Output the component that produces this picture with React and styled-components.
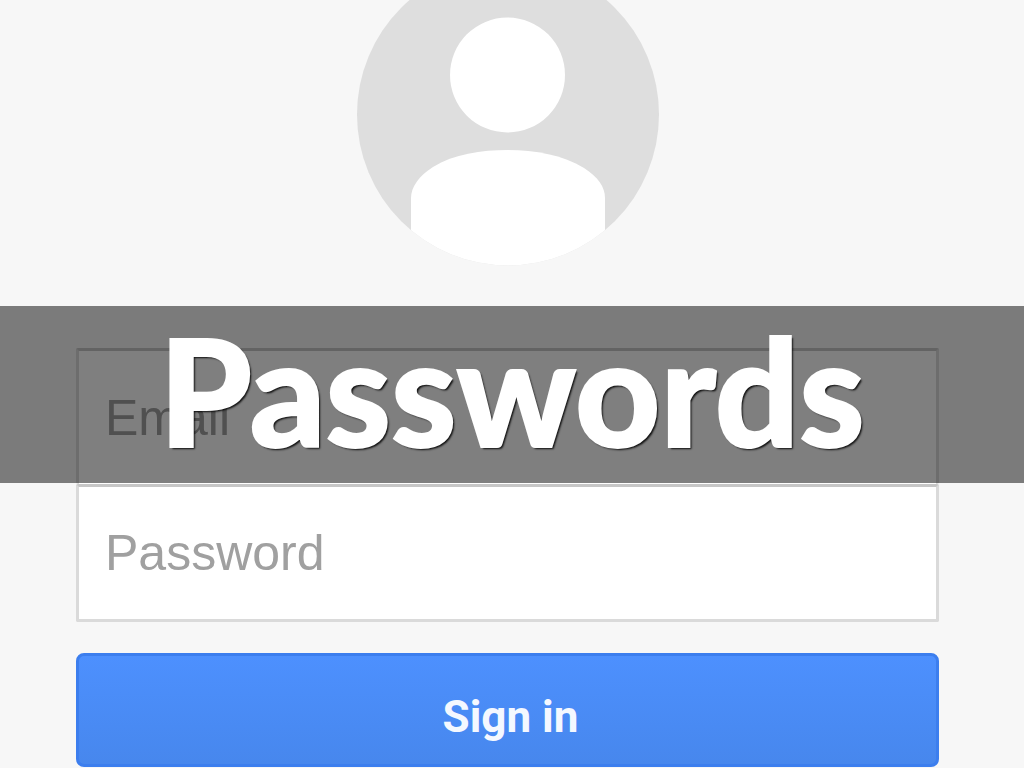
import React from "react";
import styled, { createGlobalStyle } from "styled-components";

const GlobalStyle = createGlobalStyle`
  * {
    box-sizing: border-box;
  }

  body {
    margin: 0;
    background: #f7f7f7;
    font-family: "Liberation Sans", Arial, sans-serif;
  }
`;

const Slide = styled.main`
  position: relative;
  height: 100vh;
  overflow: hidden;
  padding: 0 85px 0 76px;
`;

const Avatar = styled.svg`
  display: block;
  width: 302px;
  height: 266px;
  margin: 0 auto 82px;
`;

const Form = styled.form`
  display: flex;
  flex-direction: column;
`;

const Field = styled.input`
  width: 100%;
  height: ${(props) => (props.$joined ? 138 : 136)}px;
  padding: 0 26px;
  border: 3px solid #dadada;
  border-top-color: #c6c6c6;
  border-bottom-width: ${(props) => (props.$joined ? 3 : 0)}px;
  border-radius: 2px;
  background: #fff;
  color: #404040;
  font-family: inherit;
  font-size: 50px;
  outline: none;

  &::placeholder {
    color: #a0a0a0;
    opacity: 1;
  }
`;

const SignInButton = styled.button`
  height: 114px;
  margin-top: 31px;
  padding: 14px 0 0 6px;
  border: 3px solid #3c7eee;
  border-radius: 8px;
  background: linear-gradient(#4d90fe, #4787ed);
  color: #f4f8ff;
  font-family: Roboto, "Liberation Sans", sans-serif;
  font-size: 44px;
  font-weight: 700;
`;

const Banner = styled.div`
  position: absolute;
  top: 306px;
  left: 0;
  right: 0;
  display: flex;
  align-items: center;
  justify-content: center;
  height: 177px;
  padding-bottom: 10px;
  background: rgba(0, 0, 0, 0.5);
  pointer-events: none;
`;

const Title = styled.h1`
  margin: 0;
  color: #fff;
  font-family: Lato, "Open Sans", sans-serif;
  font-size: 148px;
  font-weight: 900;
  line-height: 168px;
  -webkit-text-stroke: 2px #fff;
  text-shadow: 2px 2px 2px rgba(0, 0, 0, 0.9);
`;

const App = () => {
  return (
    <Slide>
      <GlobalStyle />
      <Avatar viewBox="0 0 302 266" aria-hidden="true">
        <clipPath id="face">
          <circle cx="151" cy="114.5" r="151" />
        </clipPath>
        <g clipPath="url(#face)">
          <rect width="302" height="266" fill="#dedede" />
          <circle cx="150.5" cy="75" r="57.5" fill="#fff" />
          <path
            d="M54 266V198C54 187 62 176 76 167C97 154 124 150 151 150C178 150 206 155 227 168C241 177 248 187 248 198V266Z"
            fill="#fff"
          />
        </g>
      </Avatar>
      <Form onSubmit={(e) => e.preventDefault()}>
        <Field type="email" placeholder="Email" aria-label="Email" />
        <Field
          $joined
          type="password"
          placeholder="Password"
          aria-label="Password"
        />
        <SignInButton type="submit">Sign in</SignInButton>
      </Form>
      <Banner>
        <Title>Passwords</Title>
      </Banner>
    </Slide>
  );
};

export default App;
